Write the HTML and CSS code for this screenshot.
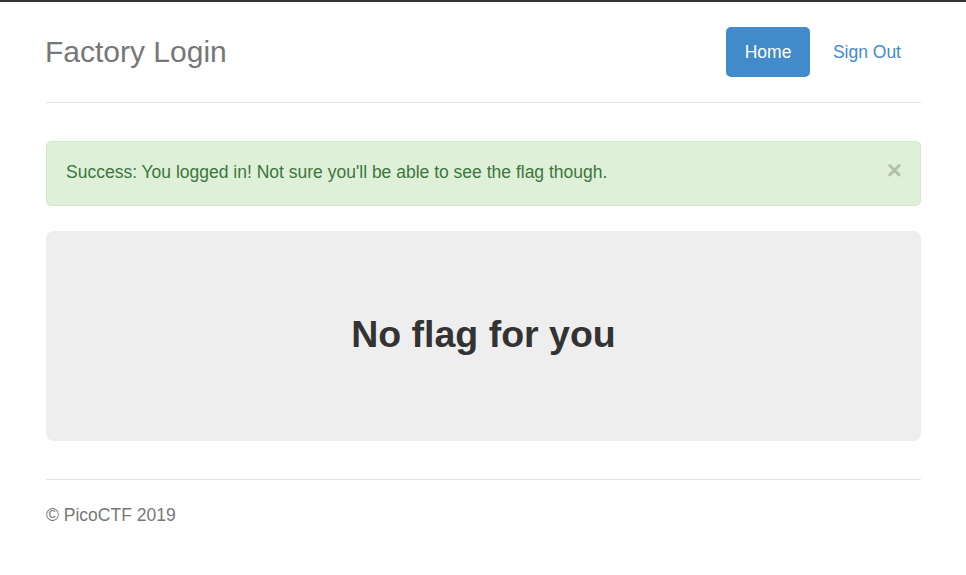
FILE: index.html
```html
<!DOCTYPE html>
<html lang="en">
<head>
<meta charset="utf-8">
<title>Factory Login</title>
<link rel="stylesheet" href="styles.css">
</head>
<body>
<div class="topbar"></div>
<div class="container">
  <header class="header">
    <h3 class="brand">Factory Login</h3>
    <nav class="nav-pills">
      <a class="pill active" href="#">Home</a>
      <a class="pill signout" href="#">Sign Out</a>
    </nav>
  </header>

  <div class="alert">
    <span>Success: You logged in! Not sure you'll be able to see the flag though.</span>
    <button class="close" type="button">×</button>
  </div>

  <div class="jumbotron">
    <h2 class="flag">No flag for you</h2>
  </div>

  <footer class="footer">
    <p>© PicoCTF 2019</p>
  </footer>
</div>
</body>
</html>
```

FILE: styles.css
```css
* { box-sizing: border-box; }
html, body { margin: 0; padding: 0; }
body {
  font-family: "Liberation Sans", Arial, Helvetica, sans-serif;
  font-size: 17.5px;
  line-height: 25px;
  color: #333;
  background: #fff;
}
.topbar {
  height: 2px;
  background: #333;
}
.container {
  padding: 25px 45px 25px 46px;
}
.header {
  display: flex;
  justify-content: space-between;
  align-items: center;
  padding-bottom: 25px;
  border-bottom: 1px solid #e5e5e5;
  margin-bottom: 38px;
}
.brand {
  margin: 0 0 0 -1px;
  font-size: 30px;
  font-weight: 400;
  line-height: 50px;
  color: #777;
}
.nav-pills {
  display: flex;
  gap: 2.5px;
}
.pill {
  display: block;
  padding: 12.5px 18.5px;
  line-height: 25px;
  border-radius: 5px;
  color: #428bca;
  text-decoration: none;
}
.pill.signout {
  padding: 12.5px 20px 12.5px 20.5px;
}
.pill.active {
  background: #428bca;
  color: #fff;
}
.alert {
  display: flex;
  justify-content: space-between;
  align-items: flex-start;
  padding: 18.75px 19px;
  margin-bottom: 25px;
  border: 1px solid #d6e9c6;
  border-radius: 5px;
  background: #dff0d8;
  color: #3c763d;
  line-height: 25px;
}
.alert span {
  margin-top: -1px;
}
.close {
  position: relative;
  top: -3px;
  padding: 0;
  margin: 0 -1px 0 0;
  border: 0;
  background: transparent;
  font-family: "Liberation Sans", Arial, sans-serif;
  font-size: 26px;
  font-weight: 700;
  line-height: 25px;
  color: #000;
  opacity: .2;
  cursor: pointer;
}
.jumbotron {
  height: 210px;
  padding: 60px 75px 0;
  margin-bottom: 38px;
  border-radius: 7.5px;
  background: #eee;
  text-align: center;
}
.flag {
  margin: 23.5px 0 12.5px;
  font-size: 37.5px;
  font-weight: 700;
  line-height: 1.1;
  color: #333;
}
.footer {
  padding-top: 23.75px;
  border-top: 1px solid #e5e5e5;
  color: #777;
}
.footer p {
  margin: 0 0 12.5px;
}
```
